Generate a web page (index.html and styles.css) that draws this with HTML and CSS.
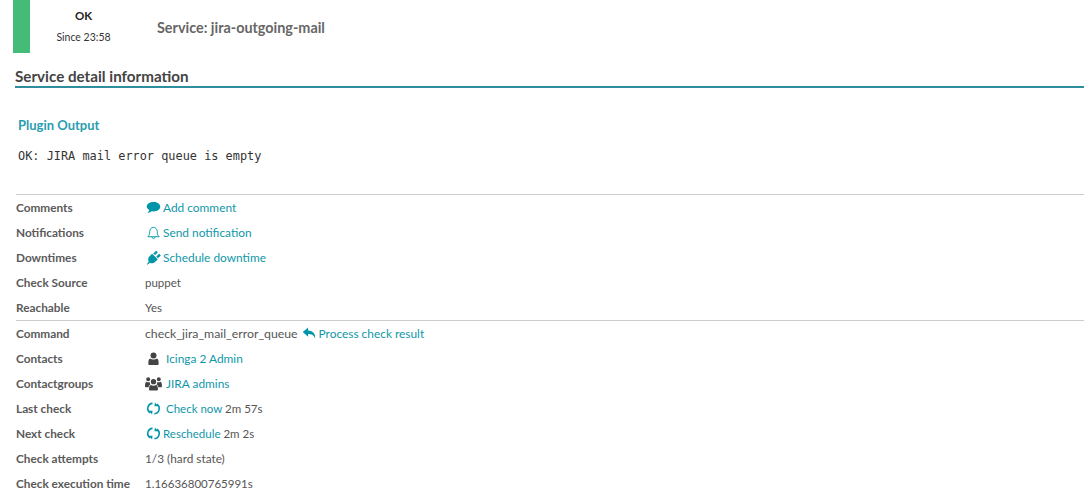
FILE: index.html
```html
<!DOCTYPE html>
<html lang="en">
<head>
<meta charset="utf-8">
<title>Service: jira-outgoing-mail</title>
<link rel="stylesheet" href="styles.css">
</head>
<body>
<header class="head">
  <div class="state-bar"></div>
  <div class="state">
    <div class="state-name">OK</div>
    <div class="state-since">Since 23:58</div>
  </div>
  <div class="service-name">Service: jira-outgoing-mail</div>
</header>
<h1 class="section-title">Service detail information</h1>
<h2 class="plugin-title">Plugin Output</h2>
<pre class="plugin-output">OK: JIRA mail error queue is empty</pre>
<section class="rows first">
  <div class="row"><span class="label">Comments</span><span class="value"><a class="link"><svg class="icon" viewBox="0 0 16 16"><path fill="#0095a8" d="M8 2.200c4 0 7.200 2.200 7.200 5s-3.200 5-7.200 5c-.6 0-1.200 0-1.800-.15C5 13 3.300 13.700 1.500 13.800c1-.9 1.800-2 2-3.100C2 9.800.8 8.600.8 7.200c0-2.800 3.200-5 7.200-5z"/></svg>Add comment</a></span></div>
  <div class="row"><span class="label">Notifications</span><span class="value"><a class="link"><svg class="icon" viewBox="0 0 16 16"><path fill="none" stroke="#0095a8" d="M2 12.500c1.500-1.500 2-3 2-5.500 0-2.500 1.800-4.500 4-4.500s4 2 4 4.500c0 2.500.5 4 2 5.500zM6.500 12.800c0 1 .7 1.700 1.500 1.700s1.500-.7 1.500-1.700"/></svg>Send notification</a></span></div>
  <div class="row"><span class="label">Downtimes</span><span class="value"><a class="link"><svg class="icon" viewBox="0 0 16 16"><path fill="#0095a8" d="M.8 15.500l2.100-3.200C2 10.500 2.200 8.300 3.600 6.900l2.900-3 6.100 6-3 3c-1.400 1.400-3.600 1.600-5.300.7L1.800 15.500zM7.800 3.700l3-3 1.800 1.700-3 3zM11 7l3.100-3 1.700 1.800-3 3z"/></svg>Schedule downtime</a></span></div>
  <div class="row"><span class="label">Check Source</span><span class="value">puppet</span></div>
  <div class="row"><span class="label">Reachable</span><span class="value">Yes</span></div>
</section>
<section class="rows">
  <div class="row"><span class="label">Command</span><span class="value"><span class="command">check_jira_mail_error_queue</span> <a class="link"><svg class="icon" viewBox="0 0 16 16"><path fill="#0095a8" d="M6.500 1.500L.8 6.500l5.700 5V8.500c3.500 0 6 .6 7.500 5 .6-5-2-8.500-7.500-8.800z"/></svg>Process check result</a></span></div>
  <div class="row"><span class="label">Contacts</span><span class="value"><a class="link wide"><svg class="icon" viewBox="0 0 16 16"><path fill="#444" d="M8 1.500a3.200 3.200 0 1 1 0 6.400 3.200 3.200 0 0 1 0-6.400zM4.500 8c1 .8 2.200 1 3.500 1s2.500-.2 3.500-1c1.500.3 2 2 2 5.500 0 .8-.5 1.300-1.200 1.300H3.700c-.7 0-1.200-.5-1.200-1.300C2.500 10 3 8.300 4.500 8z"/></svg>Icinga 2 Admin</a></span></div>
  <div class="row"><span class="label">Contactgroups</span><span class="value"><a class="link group"><svg class="icon" viewBox="0 0 16 16"><path fill="#444" d="M8 3.800a2.500 2.500 0 1 1 0 5 2.500 2.500 0 0 1 0-5zM3 2a1.900 1.900 0 1 1 0 3.800A1.900 1.900 0 0 1 3 2zM13 2a1.900 1.900 0 1 1 0 3.800A1.900 1.900 0 0 1 13 2zM4.500 6.500c-.2.800 0 1.700.6 2.500-1 .4-1.500 1.200-1.700 2.500H.8C.3 11.500 0 11.200 0 10.600 0 8 .5 6.500 1.500 6.300c1 .6 2 .7 3 .2zM11.500 6.500c1 .5 2 .4 3-.2 1 .2 1.500 1.700 1.500 4.300 0 .6-.3.900-.8.900h-2.600c-.2-1.300-.7-2.100-1.700-2.500.6-.8.800-1.700.6-2.500zM5.500 9.300c1.500 1 3.500 1 5 0 1.200.3 1.700 1.800 1.700 4 0 .8-.5 1.200-1.100 1.200H4.900c-.6 0-1.100-.4-1.100-1.200 0-2.200.5-3.700 1.700-4z"/></svg>JIRA admins</a></span></div>
  <div class="row"><span class="label">Last check</span><span class="value"><a class="link wide compact"><svg class="icon" viewBox="0 0 16 16"><path fill="none" stroke="#0095a8" stroke-width="1.700" d="M7 2.500a5.400 5.400 0 0 0-2.500 10M9 13.500a5.400 5.400 0 0 0 2.500-10"/><path fill="#0095a8" d="M3 10.500l4 0-.5 4zM13 5.500l-4 0 .5-4z"/></svg>Check now</a> 2m 57s</span></div>
  <div class="row"><span class="label">Next check</span><span class="value"><a class="link compact"><svg class="icon" viewBox="0 0 16 16"><path fill="none" stroke="#0095a8" stroke-width="1.700" d="M7 2.500a5.400 5.400 0 0 0-2.500 10M9 13.500a5.400 5.400 0 0 0 2.500-10"/><path fill="#0095a8" d="M3 10.500l4 0-.5 4zM13 5.500l-4 0 .5-4z"/></svg>Reschedule</a> 2m 2s</span></div>
  <div class="row"><span class="label">Check attempts</span><span class="value attempts">1/3 (hard state)</span></div>
  <div class="row"><span class="label">Check execution time</span><span class="value">1.16636800765991s</span></div>
</section>
</body>
</html>
```
FILE: styles.css
```css
* { box-sizing: border-box; }
html, body { margin: 0; padding: 0; background: #fff; overflow: hidden; }
body { height: 500px; font-family: Lato, "Liberation Sans", sans-serif; font-size: 11.5px; color: #555; }
.head { display: flex; height: 53px; padding-left: 13px; }
.state-bar { width: 17px; height: 53px; background: #44bb77; }
.state { width: 107px; text-align: center; padding-top: 8px; }
.state-name { font-size: 11.500px; font-weight: 700; color: #222; line-height: 15px; }
.state-since { font-size: 10.500px; color: #333; line-height: 14px; margin-top: 7px; }
.service-name { padding-left: 20px; padding-top: 19px; font-size: 14.400px; font-weight: 700; color: #666; line-height: 17px; }
.section-title { margin: 15px 0 0 15px; height: 20px; border-bottom: 2px solid #2e8e9e; font-size: 15.200px; line-height: 17px; font-weight: 700; color: #444; }
.plugin-title { margin: 29px 0 0 18px; font-size: 13px; line-height: 16px; font-weight: 700; color: #2a9db0; }
.plugin-output { margin: 16px 0 0 18px; font-family: "DejaVu Sans Mono", monospace; font-size: 11.900px; line-height: 14px; color: #333; }
.rows { margin-left: 16px; border-top: 1px solid #ccc; }
.rows.first { margin-top: 31px; }
.row { display: flex; height: 25px; align-items: center; }
.label { width: 129px; font-size: 11.800px; font-weight: 700; color: #5a5a5a; flex: none; }
.value { color: #555; white-space: nowrap; }
.attempts { font-size: 11.800px; }
.command { font-size: 12.300px; }
.link { color: #0f97a8; font-size: 11.900px; }
.link.compact { font-size: 11.500px; }
.icon { width: 15px; height: 15px; vertical-align: -3px; margin-right: 2px; margin-left: 1px; }
.wide .icon { margin-right: 5px; }
.group .icon { width: 17px; height: 17px; vertical-align: -4px; margin: 0 4px 0 0; }
```
